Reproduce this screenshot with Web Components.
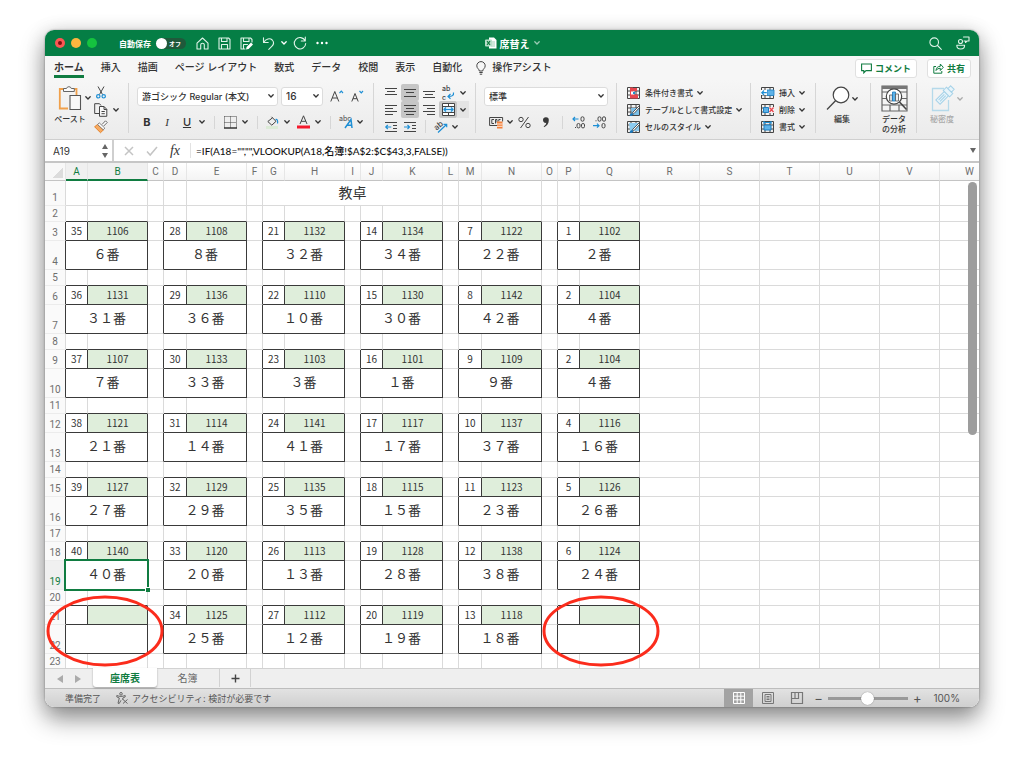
<!DOCTYPE html>
<html lang="ja">
<head>
<meta charset="utf-8">
<title>席替え</title>
<style>
html,body{margin:0;height:100%}
body{background:#fff;font-family:Inter,"Noto Sans CJK JP",sans-serif;font-size:10px;color:#333}
</style>
</head>
<body>
<xl-app></xl-app>
<script>
const BASE = `
*{box-sizing:border-box}
button,select,input{font:inherit;color:inherit;margin:0;padding:0;border:0;background:none}
button{display:inline-flex;align-items:center;justify-content:center;white-space:nowrap;line-height:1}
`;
function define(name, html, setup) {
  const t = document.createElement('template');
  t.innerHTML = html.replace('<style>', '<style>' + BASE);
  customElements.define(name, class extends HTMLElement {
    constructor() {
      super();
      this.attachShadow({mode: 'open'}).append(t.content.cloneNode(true));
    }
    connectedCallback() { if (setup) setup(this.shadowRoot, this); }
  });
}

const K = 'fill="none" stroke="#444" stroke-width="1"';
const B = 'fill="none" stroke="#1e8fd5" stroke-width="1.2"';
const W = 'fill="none" stroke="#dff3e8" stroke-width="1.1" stroke-linejoin="round" stroke-linecap="round"';
const table = `<path ${K} d="M.5.5h12v11H.5zM.5 4h12M.5 8h12M4 .5v11M9 .5v11"/>`;
const ICONS = {
  chev: [6, 4, `<path d="M.8.8 3 3 5.2.8" fill="none" stroke="currentColor" stroke-width="1.3" stroke-linecap="round"/>`],
  home: [13, 13, `<path ${W} d="M1 6.2 6.5 1 12 6.2V12H8.3V8a1.8 1.8 0 0 0-3.6 0v4H1z"/>`],
  save: [13, 13, `<path ${W} d="M1 1h9.5L12 2.500V12H1zM3.500 1v3.500h5.500V1M3.500 12V7.500h6V12"/>`],
  savepen: [13, 13, `<path ${W} d="M5 12H1V1h9.500L12 2.500V5M3.500 1v3.500h5.500V1M3.500 12V7.500h4"/><path d="M6 12.500l.600-2.600 4.400-4.400 2 2-4.400 4.400z" fill="#fff"/>`],
  undo: [13, 13, `<path ${W} d="M1.500.800V5.500H6.200M1.700 5.300C4 1.700 8 .700 10.200 3c2 2.200 1.500 4.500-.200 6.200L6.800 12.300"/>`],
  redo: [14, 14, `<path ${W} d="M12.300 1v4H8.300M12.100 4.700A5.700 5.700 0 1 0 12.700 7.500"/>`],
  dots: [12, 4, `<g fill="#fff"><circle cx="1.500" cy="2" r="1.200"/><circle cx="6" cy="2" r="1.200"/><circle cx="10.500" cy="2" r="1.200"/></g>`],
  doc: [12, 12, `<path d="M4 .500h5l2.500 2.500v8.500H4z" fill="#fff"/><path d="M6 5h4M6 7h4M6 9h4" stroke="#9fcfb5"/><rect y="2.500" width="7" height="7" rx="1" fill="#b9dfca"/><path d="M2 4.200l3 3.600M5 4.200 2 7.800" stroke="#107c41" stroke-width="1.200"/>`],
  search: [13, 13, `<circle ${W} cx="5.200" cy="5.200" r="4.300"/><path ${W} d="M8.500 8.500l3.800 3.800"/>`],
  people: [14, 14, `<circle ${W} cx="4.500" cy="5.500" r="2"/><path ${W} d="M.800 9.200h7.800c0 5-7.800 5-7.800 0zM7.500 1h5.500v4H11L9.500 6.500V5H8"/>`],
  bulb: [10, 14, `<path ${K} d="M3.300 10c0-2-2.500-2.500-2.500-5.200a4.200 4.200 0 0 1 8.400 0c0 2.700-2.500 3.200-2.500 5.200zM3.300 11.500h3.400M3.800 13.200h2.400"/>`],
  comment: [11, 11, `<path d="M.600 1h9.800v6.600H5L2.800 9.800V7.600H.600z" fill="none" stroke="#107c41" stroke-width="1.100"/>`],
  share: [11, 11, `<path d="M3 3.500H.800v6.700h8V8M3 7.500C3.200 4.500 5 3.300 7.300 3.300V1l3 3.300-3 3.200V5.300C5.500 5.300 4 6 3 7.500z" fill="none" stroke="#107c41"/>`],
  paste: [24, 25, `<path d="M7 3H1.800v19.500H10M16 3h2.500v6" fill="none" stroke="#f0a04b" stroke-width="1.800"/><path d="M5.500 5.500v-3h3a2.500 2.500 0 0 1 4.800 0h3v3z" fill="#fafafa" stroke="#666"/><path d="M12 9.500h10.500v14H12z" fill="#f8f8f8" stroke="#555" stroke-width="1.100"/>`],
  cut: [10, 13, `<path ${K} d="M2 .500l4.500 8M8 .500L3.500 8.500"/><circle ${B} cx="2.300" cy="10.300" r="1.700"/><circle ${B} cx="7.700" cy="10.300" r="1.700"/>`],
  copy: [14, 14, `<path ${K} d="M5 10.500H.700V.700h4.800L7 2.500"/><path d="M5.500 3.500H10l2.800 2.800v7H5.500zM10 3.500v3h2.800M7.500 8.500h3.300M7.500 10.700h3.300" fill="#f8f8f8" stroke="#444"/>`],
  brush: [14, 13, `<path d="M8 4.500 11.500 .800 13.200 2.500 9.700 6" fill="#fff" stroke="#666"/><path d="M3.500 4.500 .600 6.800 6.500 12.700 9.500 9.800z" fill="#f6ab62" stroke="#e8842c"/><path d="M5.200 2.800l5.600 5.300-1.500 1.700L3.700 4.600z" fill="#fff" stroke="#666" stroke-width=".800"/>`],
  grow: [14, 14, `<path ${K} d="M.800 12.500 4.800 2.500 8.800 12.500M2.300 9h5"/><path ${B} d="M9.500 4l1.800-1.800L13 4"/>`],
  shrink: [13, 14, `<path ${K} d="M.800 12.500 4 4.500 7.200 12.500M2 9.700h4"/><path ${B} d="M8.500 2l1.800 1.800L12 2"/>`],
  borders: [13, 13, `<path ${K} stroke-dasharray="1 1" d="M.500.500h12M.500.500v11M12.500.500v11M6.500.500v11M.500 6.500h12"/><path stroke="#333" stroke-width="1.500" d="M0 12h13"/>`],
  fill: [13, 13, `<path ${K} d="M5.500.800 10 5.300 5.800 9.200 1.800 5.500 6.500 1.800"/><path ${B} d="M9.500 3.500c2-.500 2.500 1.500 2 4"/><path d="M0 10h12v3H0z" fill="#dcebd7"/>`],
  fcolor: [13, 14, `<path ${K} d="M3 9 6.500.800 10 9M4.200 6.300h4.600"/><path d="M0 10.500h13v3H0z" fill="#f5192c"/>`],
  phon: [15, 14, `<text x="0" y="6" font-size="7" font-family="Inter" fill="#666">abc</text><path fill="none" stroke="#1e8fd5" stroke-width="1.500" d="M6 13 12 4.500 13 13M8 10.300h5"/>`],
  top: [12, 12, `<path ${K} d="M0 1.500h12M2 4.500h8M0 7.500h12"/>`],
  mid: [12, 12, `<path ${K} d="M0 2.500h12M2 5.500h8M0 9.500h12"/>`],
  bot: [12, 12, `<path ${K} d="M0 4.500h12M2 7.500h8M0 10.500h12"/>`],
  left: [12, 12, `<path ${K} d="M0 1.500h12M0 4.500h8M0 7.500h12M0 10.500h8"/>`],
  cen: [12, 12, `<path ${K} d="M0 1.500h12M2 4.500h8M0 7.500h12M2 10.500h8"/>`],
  right: [12, 12, `<path ${K} d="M0 1.500h12M4 4.500h8M0 7.500h12M4 10.500h8"/>`],
  wrap: [13, 14, `<text x="0" y="5" font-size="7" font-family="Inter" fill="#444">ab</text><text x="0" y="14" font-size="7" font-family="Inter" fill="#444">c</text><path ${B} d="M11.500 6.500c.500 3-1.500 4-5 4M8.500 8 6 10.500l2.500 2.300"/>`],
  merge: [13, 13, `<path d="M.500.500h12v12H.500zM.500 3.500h12M.500 9.500h12M6.500.500v3M6.500 9.500v3" fill="#fff" stroke="#444"/><path d="M1 4h11v5H1z" fill="#d4ecfb"/><path ${B} d="M2 6.500h9M4 4.500l-2 2 2 2M9 4.500l2 2-2 2"/>`],
  outd: [13, 12, `<path ${K} d="M0 1.500h12M8 4.500h4M8 7.500h4M0 10.500h12"/><path ${B} d="M.800 6h5.500M2.800 4l-2 2 2 2"/>`],
  ind: [13, 12, `<path ${K} d="M0 1.500h12M8 4.500h4M8 7.500h4M0 10.500h12"/><path ${B} d="M0 6h5.500M3.500 4l2 2-2 2"/>`],
  orient: [14, 13, `<text x="0" y="8" font-size="8" font-family="Inter" fill="#444" transform="rotate(-40 5 6)">ab</text><path ${B} d="M4 12.500 12.500 4.500M9.500 4.300h3.200v3"/>`],
  money: [15, 13, `<path ${K} d="M8 9.500H.600V1.500h13v4M5 3.500H2.800v4H5M8 6.500V3.500H6.500v4M11.500 3.500H9.800v2"/><path d="M8 5.500h5.500v7H8z" fill="#f3803a"/><path d="M8 8h5.500M8 10.300h5.500" stroke="#fff" stroke-width=".800"/>`],
  percent: [13, 13, `<circle ${K} cx="3" cy="3.500" r="2.200"/><circle ${K} cx="10" cy="9.500" r="2.200"/><path ${K} d="M10.500 1 2.500 12"/>`],
  comma: [8, 11, `<path d="M1 3a2.800 2.800 0 0 1 5.800.300C6.800 6.500 5 9 2 10.300L1.700 9.500C3.300 8.500 4.200 7 4.200 5.800 2.500 6.200 1 5 1 3z" fill="#3a3a3a"/>`],
  decinc: [14, 13, `<path ${B} d="M6.500 3H1M3 1 1 3l2 2"/><g ${K}><rect x="9" y=".800" width="3" height="4.400" rx="1.400"/><rect x="5" y="7.500" width="3" height="4.400" rx="1.400"/><rect x="9.500" y="7.500" width="3" height="4.400" rx="1.400"/></g><path d="M3 11.500h1" stroke="#444"/>`],
  decdec: [14, 13, `<path ${B} d="M0 9.700h6M4 7.700l2 2-2 2"/><g ${K}><rect x="5" y=".800" width="3" height="4.400" rx="1.400"/><rect x="9.500" y=".800" width="3" height="4.400" rx="1.400"/><rect x="9" y="7.500" width="3" height="4.400" rx="1.400"/></g><path d="M2.500 4.800h1" stroke="#444"/>`],
  cond: [13, 12, `${table}<path d="M3 .500h3v11H3zM6 1h4v3H6zM6 7.500h5v4H6z" fill="#e8474f"/><path d="M4 4.500h3v3H4z" fill="#fff"/><path d="M6 5h2v2H6z" fill="#1e8fd5"/>`],
  fmt: [13, 12, `${table}<path d="M4 4h8v7H5z" fill="#7cc1ea"/><path d="M4 11.500 6 8l6-6 1 1-6 6.500z" fill="#fff" stroke="#333" stroke-width=".800"/><path d="M2.500 11.800c.500-2 1.500-3 3.500-2.300.500 2-1 2.800-3.500 2.300z" fill="#1878bd"/>`],
  style: [13, 12, `${table}<path d="M2 2h10v8H3z" fill="#8ccbf0"/><path d="M4 11.500 6 8l6-6 1 1-6 6.500z" fill="#fff" stroke="#333" stroke-width=".800"/><path d="M2.500 11.800c.500-2 1.500-3 3.500-2.300.500 2-1 2.800-3.500 2.300z" fill="#1878bd"/>`],
  ins: [13, 12, `${table}<path d="M6 3h7v5.500H6z" fill="#5db2e8" stroke="#1e7fc0" stroke-width=".800"/><path d="M0 3h6v5H0z" fill="#fff"/><path ${B} d="M.800 5.700h5M3 3.500.800 5.700 3 8"/>`],
  del: [13, 12, `${table}<path d="M6 3h7v6H6z" fill="#f6f6f6"/><path d="M2.500 3.500h5v5h-5z" fill="#5db2e8" stroke="#1e7fc0"/><path d="M8.500 3.500l4 4.500M12.500 3.500l-4 4.500" stroke="#e8474f" stroke-width="1.300"/>`],
  form: [13, 12, `${table}<path d="M3 4h7v5H3z" fill="#5db2e8" stroke="#1e7fc0"/><path ${B} d="M3 1.500h7M3 0v3M10 0v3"/>`],
  find: [24, 25, `<circle cx="15" cy="9" r="7.800" fill="#fff" stroke="#444" stroke-width="1.200"/><path fill="none" stroke="#444" stroke-width="1.300" d="M9.500 14.800 1 23.500"/>`],
  data: [27, 27, `<path d="M1 1h25v25H1zM1 7h25M1 13.500h25M1 20h25M9 20v6M18 20v6" fill="#f4f4f4" stroke="#666" stroke-width="1.200"/><path d="M1 1h25v3H1z" fill="#777"/><circle cx="13" cy="11.500" r="7.700" fill="#fff" stroke="#444" stroke-width="1.200"/><path d="M18.500 17l7 7.500" stroke="#444" stroke-width="1.600"/><path d="M8.500 10h3v6h-3z" fill="#ddd" stroke="#555" stroke-width=".800"/><path d="M11.500 7h3v9h-3z" fill="#5db2e8" stroke="#1878bd" stroke-width=".800"/><path d="M14.500 9h3v7h-3z" fill="#eee" stroke="#555" stroke-width=".800"/>`],
  secret: [24, 26, `<path d="M13 2.500H1.500v22h16V14" fill="none" stroke="#b5d9ea" stroke-width="1.300"/><g transform="rotate(45 14 9)" fill="#e8f4fa" stroke="#a6d2e8"><path d="M11 7h6v12h-6z"/><path d="M13 9v8M15 9v8"/><path d="M9.500 2.500h9v4.500h-9zM11.500-1.500h5v4h-5z"/></g>`],
  up: [6, 5, `<path d="M3 0l3 5H0z" fill="#666"/>`],
  down: [6, 5, `<path d="M0 0h6L3 5z" fill="#666"/>`],
  cross: [10, 10, `<path d="M1 1l8 8M9 1 1 9" stroke="#c4c4c4" stroke-width="1.500"/>`],
  check: [12, 10, `<path d="M1 5.500 4.200 9 11 1" fill="none" stroke="#c4c4c4" stroke-width="1.500"/>`],
  prev: [6, 8, `<path d="M6 0v8L0 4z" fill="#ababab"/>`],
  next: [6, 8, `<path d="M0 0v8l6-4z" fill="#ababab"/>`],
  plus: [9, 9, `<path d="M4.500.500v8M.500 4.500h8" stroke="#444" stroke-width="1.400"/>`],
  access: [12, 12, `<g fill="none" stroke="#666"><circle cx="5" cy="1.800" r="1.300"/><path d="M.800 3.500c3 1.200 5.400 1.200 8.400 0v1.400L6.800 6v2M.800 3.500v1.400L3.300 6 2 11.200l1.200.300L5 8.300M7 7.500l4.500 4M11.500 7.500l-4.500 4"/></g>`],
  grid: [12, 12, `<path d="M.500.500h11v11H.500zM.500 4.200h11M.500 7.800h11M4.200.500v11M7.800.500v11" fill="none" stroke="#fff"/>`],
  page: [12, 12, `<path d="M.500.500h11v11H.500zM3 2.500h6v7H3zM4.500 4.500h3M4.500 6h3M4.500 7.500h3" fill="none" stroke="#777"/>`],
  brk: [12, 12, `<path d="M.500.500h11v11H.500zM.500 6.500h7v-6M4 .500v6" fill="none" stroke="#777" stroke-width="1.200"/>`]
};
customElements.define('xl-icon', class extends HTMLElement {
  constructor() { super(); this.attachShadow({mode: 'open'}); }
  connectedCallback() {
    const [w, h, art] = ICONS[this.getAttribute('name')];
    this.shadowRoot.innerHTML = `<style>:host{display:inline-flex;flex:none}svg{display:block;overflow:visible}</style><svg width="${w}" height="${h}" viewBox="0 0 ${w} ${h}" aria-hidden="true">${art}</svg>`;
  }
});
const btn = (icon, label, cls = '') => `<button type="button" class="${cls}" aria-label="${label}"><xl-icon name="${icon}"></xl-icon></button>`;
const more = (label = 'メニュー') => btn('chev', label);

define('xl-title-bar', `<style>
:host{display:grid;grid-template-columns:1fr auto 1fr;align-items:center;height:26px;background:#057e45;color:#fff;flex:none}
div{display:flex;align-items:center}
.lights{gap:6px;padding:0 22px 0 10px}
.lights button{width:10px;height:10px;border-radius:5px;background:#fdb63f}
.lights .r{background:#fc5753}.lights .g{background:#15c33f}
.lights .r::after{content:"";width:4px;height:4px;border-radius:2px;background:#7c0f10}
label{font-size:8px;font-weight:700;display:flex;align-items:center;gap:5px;white-space:nowrap}
.sw{display:flex;align-items:center;width:30px;height:11px;border-radius:6px;background:#20593b;font-size:6px}
.sw input{appearance:none;width:11px;height:11px;border-radius:6px;background:#fff;margin-right:2px}
.tools{gap:9px;padding-left:10px}
.tools button:nth-child(4){margin-right:-3px}
.tools button:nth-child(5){margin-right:-3px}
.name{gap:3px;font-size:10px;font-weight:700}
.name button{opacity:.6;margin-left:1px}
.end{justify-content:flex-end;gap:14px;padding-right:9px}
</style>
<div><div class="lights"><button class="r" aria-label="閉じる"></button><button aria-label="しまう"></button><button class="g" aria-label="拡大"></button></div>
<label>自動保存<span class="sw"><input type="checkbox" role="switch">オフ</span></label>
<div class="tools">${btn('home','ホーム')}${btn('save','保存')}${btn('savepen','名前を付けて保存')}${btn('undo','元に戻す')}${more()}${btn('redo','やり直し')}${btn('dots','その他')}</div></div>
<div class="name"><xl-icon name="doc"></xl-icon><span>席替え</span>${more('ファイル')}</div>
<div class="end">${btn('search','検索')}${btn('people','共同作業')}</div>`);

define('xl-ribbon-tabs', `<style>
:host{display:flex;align-items:stretch;height:24px;padding:0 8px 0 9px;flex:none;background:#f6f6f6}
nav{display:flex;gap:17px;flex:1}
a{color:#333;text-decoration:none;font-size:10px;font-weight:500;line-height:23px;white-space:nowrap;border-bottom:3px solid transparent;height:22px}
a.on{font-weight:700;border-color:#107c41}
a.tell{display:flex;align-items:flex-start;gap:6px;margin-left:-3px}
a.tell xl-icon{padding-top:5px}
.act{display:flex;gap:10px;padding-top:3px}
.act button{height:19px;padding:0 5px;gap:3px;background:#fff;border:1px solid #e0e0e0;border-radius:3px;color:#107c41;font-size:9px;font-weight:700}
</style><nav><a class="on" href="#">ホーム</a><a href="#">挿入</a><a href="#">描画</a><a href="#">ページ レイアウト</a><a href="#">数式</a><a href="#">データ</a><a href="#">校閲</a><a href="#">表示</a><a href="#">自動化</a><a class="tell" href="#"><xl-icon name="bulb"></xl-icon>操作アシスト</a></nav>
<div class="act"><button><xl-icon name="comment"></xl-icon>コメント</button><button><xl-icon name="share"></xl-icon>共有</button></div>`);

define('xl-group', `<style>
:host{display:block;flex:none;position:relative;height:56px}
:host(:not([last]))::after{content:"";position:absolute;right:0;top:3px;height:50px;width:1px;background:#d6d6d6}
</style><slot></slot>`);

define('xl-ribbon', `<style>
:host{display:flex;height:60px;flex:none;background:linear-gradient(#f6f6f6,#ebebeb);border-bottom:1px solid #cfcfcf;overflow:hidden;font-size:8px;font-weight:500}
.clip{width:84px;padding:4px 0 0 10px}
.two{display:grid;grid-template:28px 23px/30px 6px 1fr}
.side{grid-row:1/3;grid-column:3;display:grid;grid-template:repeat(3,17px)/20px 10px;justify-content:start}
.cap{justify-self:center;white-space:nowrap;line-height:11px;padding-top:2px}
.font{width:245px}.num{width:141px}
.font,.num{padding:7px 0 0 8px}
.line{display:flex;gap:3px;height:18px;align-items:center}
.line>button{margin-left:4px}
.pick{position:relative;display:flex;font-size:9px}
.pick.size{font-size:10px}
.pick xl-icon{position:absolute;right:4px;top:7px;pointer-events:none}
select{appearance:none;height:19px;background:#fff;border:1px solid #dcdcdc;border-radius:3px;padding:0 4px;width:100%}
.tools{display:grid;height:18px;margin-top:8px;font-size:11px}
.font .tools{grid-template-columns:20px 20px 20px 10px 14px 18px 12px 12px 18px 12px 20px 9px 16px 16px 12px}
.num .tools{grid-template-columns:24px 4px 24px 20px 12px 21px 21px}
.sep{justify-self:center;align-self:center;width:1px;height:13px;background:#d6d6d6}
.alig{width:102px;padding:4px 0 0 7px}
.a1{display:grid;grid-template:repeat(2,17px)/20px 18px 20px 18px 12px}
.a2{display:grid;grid-template:17px/20px 18px 12px 20px 8px}
.on{background:#c6c6c6;border-radius:2px}.on+.drop{background:#e4e4e4}
.cells{width:134px;padding:4px 0 0 10px;display:flex;flex-direction:column;align-items:flex-start}
.cells button{height:17px;gap:5px}.cells button xl-icon:last-child{margin-left:-1px}
.ins{width:65px}
.big{display:grid;justify-items:center;text-align:center;align-content:start;padding-top:4px}
.big .row{display:flex;height:29px;align-items:center}.big .row button{padding:0 1px}
.big span{line-height:10px;padding-top:1px}
.edit{width:55px;padding-left:9px;justify-content:start}
.ana{width:46px}.sec{width:64px;padding-left:13px;justify-content:start;justify-items:start;color:#aaa}
i{font-family:"Liberation Serif",serif}
</style>
<xl-group class="clip"><div class="two">${btn('paste','ペースト')}${more()}<div class="cap">ペースト</div>
<div class="side">${btn('cut','切り取り')}<span></span>${btn('copy','コピー')}${more()}${btn('brush','書式のコピー')}</div></div></xl-group>
<xl-group class="font"><div class="line"><div class="pick" style="width:141px"><select aria-label="フォント"><option>游ゴシック Regular (本文)</option></select><xl-icon name="chev"></xl-icon></div><div class="pick size" style="width:42px"><select aria-label="サイズ"><option>16</option></select><xl-icon name="chev"></xl-icon></div>${btn('grow','拡大')}${btn('shrink','縮小')}</div>
<div class="tools"><button aria-label="太字"><b>B</b></button><button aria-label="斜体"><i>I</i></button><button aria-label="下線"><u>U</u></button>${more()}<span class="sep"></span>${btn('borders','罫線')}${more()}<span class="sep"></span>${btn('fill','塗りつぶし')}${more()}${btn('fcolor','文字色')}${more()}<span class="sep"></span>${btn('phon','ふりがな')}${more()}</div></xl-group>
<xl-group class="alig"><div class="a1">${btn('top','上揃え')}${btn('mid','中央','on')}${btn('bot','下揃え')}${btn('wrap','折り返し')}${more()}${btn('left','左')}${btn('cen','中央','on')}${btn('right','右')}${btn('merge','結合','on')}${btn('chev','結合メニュー','drop')}</div>
<div class="a2">${btn('outd','字下げ解除')}${btn('ind','字下げ')}<span class="sep"></span>${btn('orient','方向')}${more()}</div></xl-group>
<xl-group class="num"><div class="line"><div class="pick" style="width:124px"><select aria-label="表示形式"><option>標準</option></select><xl-icon name="chev"></xl-icon></div></div>
<div class="tools">${btn('money','通貨')}${more()}${btn('percent','パーセント')}${btn('comma','桁区切り')}<span class="sep"></span>${btn('decinc','小数点以下を増やす')}${btn('decdec','小数点以下を減らす')}</div></xl-group>
<xl-group class="cells"><button><xl-icon name="cond"></xl-icon>条件付き書式<xl-icon name="chev"></xl-icon></button><button><xl-icon name="fmt"></xl-icon>テーブルとして書式設定<xl-icon name="chev"></xl-icon></button><button><xl-icon name="style"></xl-icon>セルのスタイル<xl-icon name="chev"></xl-icon></button></xl-group>
<xl-group class="cells ins"><button><xl-icon name="ins"></xl-icon>挿入<xl-icon name="chev"></xl-icon></button><button><xl-icon name="del"></xl-icon>削除<xl-icon name="chev"></xl-icon></button><button><xl-icon name="form"></xl-icon>書式<xl-icon name="chev"></xl-icon></button></xl-group>
<xl-group class="big edit"><div class="row">${btn('find','編集')}${more()}</div><span>編集</span></xl-group>
<xl-group class="big ana"><div class="row">${btn('data','データの分析')}</div><span>データ<br>の分析</span></xl-group>
<xl-group class="big sec" last><div class="row">${btn('secret','秘密度')}${more()}</div><span>秘密度</span></xl-group>`);

define('xl-formula-bar', `<style>
:host{display:flex;align-items:stretch;height:23px;background:#fff;border-bottom:2px solid #c6c6c6;flex:none}
.name{display:flex;width:69px;border-right:2px solid #cfcfcf;padding:0 4px 0 8px}
.name input{flex:1;min-width:0;font-size:10px}
.step{display:flex;flex-direction:column;justify-content:center;gap:4px}
.ops{display:grid;grid-template-columns:30px 16px 30px;align-items:center;border-right:1px solid #e2e2e2;margin:3px 5px 3px 0}
.ops i{font:italic 14px "Liberation Serif",serif}
.f{flex:1;min-width:0;font:500 10px Lato,"Noto Sans CJK JP",sans-serif;color:#111}
.d{width:12px}
</style><div class="name"><input value="A19" aria-label="セル"><div class="step">${btn('up','上')}${btn('down','下')}</div></div>
<div class="ops">${btn('cross','取消')}${btn('check','確定')}<button aria-label="関数"><i>fx</i></button></div>
<input class="f" aria-label="数式">${btn('down','展開','d')}`, r => {
  r.querySelector('.f').value = '=IF(A18="","",VLOOKUP(A18,名簿!$A$2:$C$43,3,FALSE))';
});

const SEATS = [
  [[35,1106,6],[28,1108,8],[21,1132,32],[14,1134,34],[7,1122,22],[1,1102,2]],
  [[36,1131,31],[29,1136,36],[22,1110,10],[15,1130,30],[8,1142,42],[2,1104,4]],
  [[37,1107,7],[30,1133,33],[23,1103,3],[16,1101,1],[9,1109,9],[2,1104,4]],
  [[38,1121,21],[31,1114,14],[24,1141,41],[17,1117,17],[10,1137,37],[4,1116,16]],
  [[39,1127,27],[32,1129,29],[25,1135,35],[18,1115,15],[11,1123,23],[5,1126,26]],
  [[40,1140,40],[33,1120,20],[26,1113,13],[19,1128,28],[12,1138,38],[6,1124,24]],
  [null,[34,1125,25],[27,1112,12],[20,1119,19],[13,1118,18],null]
];
const wide = n => String(n).replace(/\d/g, d => String.fromCharCode(d.charCodeAt(0) + 0xFEE0));

define('xl-sheet', `<style>
:host{display:block;flex:1;min-height:0;position:relative;overflow:hidden;background:#fff;font-family:"Noto Sans CJK JP",sans-serif}
table{border-collapse:separate;border-spacing:0;table-layout:fixed;width:1px}
th,td{padding:0;border:0 solid #dadada;border-width:0 1px 1px 0;text-align:center;white-space:nowrap;overflow:hidden;line-height:14px}
th{font:400 10px/15px Roboto,sans-serif;color:#6e6e6e;background:#fafafa}
thead th{height:18px;border-bottom-color:#c4c4c4;border-right-color:#e6e6e6;background:linear-gradient(#fff,#f4f4f4)}
thead th.on{color:#107c41;border-bottom:2px solid #107c41;background:#f0f0f0}
thead th:first-child{background:linear-gradient(135deg,transparent 50%,#dcdcdc 50%) 7px 4px/11px 11px no-repeat,#f8f8f8}
tbody th{vertical-align:bottom;border-bottom-color:#ececec;text-align:center}
tbody th.on{color:#107c41;background:#f0f0f0}
.r{border-right-color:#3a3a3a}.b{border-bottom-color:#3a3a3a}
.no{background:#dfeedb}
.seat,.desk{padding-bottom:2px}
.seat{font-size:13px}.desk{font-size:14px}
.sel{position:relative;overflow:visible}
.sel::before{content:"";position:absolute;inset:-2px;border:2px solid #107c41}
.sel::after{content:"";position:absolute;right:-3px;bottom:-3px;width:4px;height:4px;background:#107c41;border:solid #fff;border-width:1px 0 0 1px;box-sizing:content-box}
svg{position:absolute;top:432px;width:118px;height:72px;overflow:visible}
ellipse{fill:none;stroke:#fb2c1c;stroke-width:3}
.bar{position:absolute;right:2px;top:19px;width:9px;height:253px;border-radius:5px;background:#9d9d9d}
</style><table><colgroup></colgroup><thead><tr></tr></thead><tbody></tbody></table>
<svg style="left:1px" viewBox="0 0 118 72" aria-hidden="true"><ellipse cx="59" cy="36" rx="57" ry="34"/></svg>
<svg style="left:497px" viewBox="0 0 118 72" aria-hidden="true"><ellipse cx="59" cy="36" rx="57" ry="34"/></svg><div class="bar"></div>`, r => {
  const letters = 'ABCDEFGHIJKLMNOPQRSTUVW';
  const widths = [21, 22,60,16, 23,60,16, 22,60,16, 22,60,16, 23,60,16, 22,60, 60,60,60,60,60,60];
  r.querySelector('colgroup').innerHTML = widths.map(w => `<col style="width:${w}px">`).join('');
  r.querySelector('thead tr').innerHTML = '<th></th>' + [...letters].map(l => `<th scope="col" class="${l < 'C' ? 'on' : ''}">${l}</th>`).join('');
  const cell = (cls = '', txt = '', span = 1) => `<td class="${cls}" colspan="${span}">${txt}</td>`;
  let out = '';
  for (let n = 1; n <= 23; n++) {
    const kind = n < 3 ? 0 : n % 3;
    const h = n === 1 ? 25 : n === 2 ? 16 : [19, 29, 16][kind];
    const inBox = n > 2 && kind < 2;
    const edge = inBox ? 'r' : '';
    const above = n > 1 && n < 21 && (n === 2 || kind === 2) ? 'b' : '';
    out += `<tr style="height:${h}px"><th scope="row" class="${edge} ${n === 19 ? 'on' : ''}">${n}</th>`;
    for (let g = 0; g < 6; g++) {
      const s = inBox ? SEATS[Math.floor(n / 3) - 1][g] : null;
      if (n === 1 && g === 2) { out += cell('desk', '教卓', 5); continue; }
      if (n === 1 && g === 3) { out += cell(); continue; }
      if (!inBox) out += cell(above) + cell(above);
      else if (kind === 0) out += cell('r b', s ? s[0] : '') + cell('r b no', s ? s[1] : '');
      else out += cell('r b seat' + (n === 19 && g === 0 ? ' sel' : ''), s ? wide(s[2]) + '番' : '', 2);
      if (g < 5) out += cell(edge);
    }
    for (let i = 0; i < 6; i++) out += cell();
    out += '</tr>';
  }
  r.querySelector('tbody').innerHTML = out;
});

define('xl-sheet-tabs', `<style>
:host{display:flex;height:20px;flex:none;background:#efefef;border-top:1px solid #d2d2d2;position:relative}
.nav{display:flex;gap:12px;width:48px;padding-left:12px;align-items:center}
.tab{width:64px;height:18px;font-size:10px;color:#666}
.tab.on{margin-top:-1px;height:19px;background:#fff;color:#107c41;font-weight:700;border-radius:0 0 3px 3px;box-shadow:0 1px 2px #0005}
.tab.two{width:63px;border-right:1px solid #d2d2d2;padding-right:1px}
.add{width:31px;height:18px;border-right:1px solid #d2d2d2}
</style><div class="nav">${btn('prev','前')}${btn('next','次')}</div><button class="tab on">座席表</button><button class="tab two">名簿</button>${btn('plus','シートの追加','add')}`);

define('xl-status-bar', `<style>
:host{display:flex;align-items:center;height:19px;flex:none;background:linear-gradient(#e2e2e2,#cfcfcf);border-top:1px solid #bdbdbd;color:#555;font-size:9px;padding:0 19px 0 20px;white-space:nowrap}
.acc{display:flex;align-items:center;gap:4px;margin-left:15px;flex:1}
.v{width:29px;height:18px}.v.on{background:#a3a3a3}
label{display:flex;align-items:center;gap:5px;margin-left:3px;font-size:13px}
input{appearance:none;width:80px;height:13px;background:linear-gradient(#999,#999) 0 50%/100% 3px no-repeat}
input::-webkit-slider-thumb{appearance:none;width:13px;height:13px;border-radius:7px;background:#fff;box-shadow:0 0 1px #0008}
output{font-size:10px;margin-left:12px}
</style><span>準備完了</span><span class="acc"><xl-icon name="access"></xl-icon><span>アクセシビリティ: 検討が必要です</span></span>
${btn('grid','標準','v on')}${btn('page','ページ','v')}${btn('brk','改ページ','v')}<label>−<input type="range" aria-label="ズーム" value="50">+</label><output>100%</output>`);

define('xl-app', `<style>
:host{display:flex;box-sizing:border-box;height:100vh;min-height:400px;padding:30px 45px 59px}
main{display:flex;flex-direction:column;flex:1;min-width:0;border-radius:9px;overflow:hidden;background:#f4f4f4}
.shadow{display:flex;flex:1;min-width:0;border-radius:9px;box-shadow:0 12px 24px #0000006b,0 2px 20px #0002,0 0 2px #0006}
</style><div class="shadow"><main><xl-title-bar></xl-title-bar><xl-ribbon-tabs></xl-ribbon-tabs><xl-ribbon></xl-ribbon><xl-formula-bar></xl-formula-bar><xl-sheet></xl-sheet><xl-sheet-tabs></xl-sheet-tabs><xl-status-bar></xl-status-bar></main></div>`);
</script>
</body>
</html>
